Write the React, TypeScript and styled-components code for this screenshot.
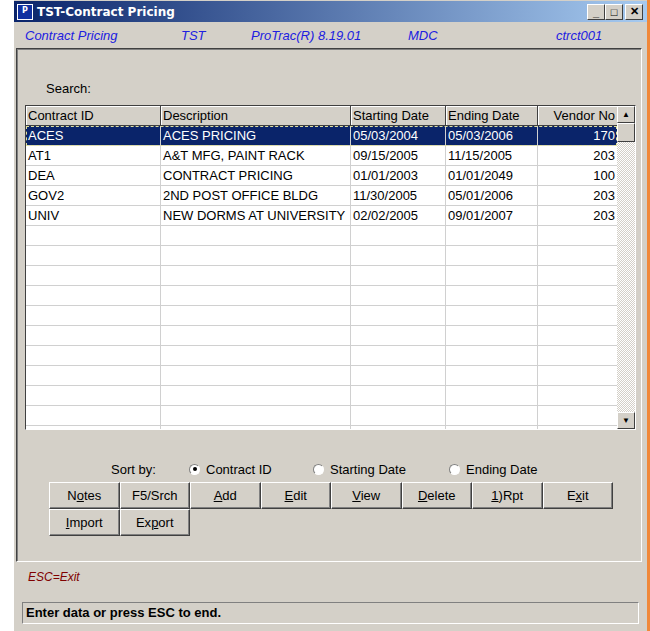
import styled, { createGlobalStyle } from 'styled-components';

const Global = createGlobalStyle`
  body { margin: 0; background: #fff; font-family: Arial, "Liberation Sans", sans-serif; }
`;

const Page = styled.div`
  width: 650px;
  height: 631px;
  display: flex;
  background: #fff;
`;

const Win = styled.div`
  margin-left: 13px;
  width: 633px;
  height: 631px;
  background: #d4d0c8;
  border-left: 1px solid #fff;
  display: flex;
  flex-direction: column;
`;

const Edge = styled.div`
  width: 4px;
  background: #f0883a;
`;

const TitleBar = styled.div`
  height: 21px;
  margin-top: 1px;
  background: linear-gradient(to right, #0a246a, #a6caf0);
  display: flex;
  align-items: center;
  padding: 0 4px 0 3px;
  color: #fff;
  font: bold 12px Tahoma, "DejaVu Sans", sans-serif;
  gap: 4px;
`;

const AppIcon = styled.div`
  width: 14px;
  height: 14px;
  background: #1030a0;
  border: 1px solid #fff;
  color: #fff;
  font-size: 8px;
  line-height: 12px;
  text-align: center;
`;

const Controls = styled.div`
  margin-left: auto;
  display: flex;
`;

const CtlBtn = styled.div<{ $gap?: boolean }>`
  width: 18px;
  height: 16px;
  margin-left: ${p => (p.$gap ? '2px' : '0')};
  background: #d4d0c8;
  border: 1px solid;
  border-color: #fff #404040 #404040 #fff;
  color: #000;
  font: bold 11px Arial, sans-serif;
  display: flex;
  align-items: center;
  justify-content: center;
  box-sizing: border-box;
`;

const InfoBar = styled.div`
  display: flex;
  height: 26px;
  align-items: center;
  font: italic 13px Arial, "Liberation Sans", sans-serif;
  color: #2020e0;
  padding-left: 11px;
`;

const Info = styled.span<{ $w: number }>`
  width: ${p => p.$w}px;
`;

const Panel = styled.div`
  margin: 0 5px 0 2px;
  height: 514px;
  border: 1px solid;
  border-color: #404040 #fff #fff #404040;
  box-shadow: inset 1px 1px 0 #808080;
  box-sizing: border-box;
  padding: 32px 8px 0 8px;
  display: flex;
  flex-direction: column;
`;

const Label = styled.div`
  font-size: 13px;
  color: #000;
  padding-left: 21px;
  height: 24px;
`;

const Grid = styled.div`
  width: 611px;
  height: 325px;
  border: 1px solid;
  border-color: #404040 #fff #fff #404040;
  box-shadow: inset 0 -1px 0 #404040;
  box-sizing: border-box;
  background: #fff;
  display: flex;
  overflow: hidden;
`;

const Table = styled.div`
  flex: 1;
  display: flex;
  flex-direction: column;
  overflow: hidden;
`;

const Row = styled.div<{ $sel?: boolean; $head?: boolean }>`
  display: grid;
  grid-template-columns: 135px 190px 95px 92px 80px;
  height: 20px;
  flex-shrink: 0;
  font-size: 13px;
  background: ${p => (p.$sel ? '#0a246a' : p.$head ? '#d4d0c8' : '#fff')};
  color: ${p => (p.$sel ? '#fff' : '#000')};
  outline: ${p => (p.$sel ? '1px dashed #e0e0a0' : 'none')};
  outline-offset: -1px;
`;

const Cell = styled.div<{ $right?: boolean; $head?: boolean }>`
  padding: 0 2px;
  line-height: 19px;
  white-space: nowrap;
  overflow: hidden;
  text-align: ${p => (p.$right ? 'right' : 'left')};
  border-right: 1px solid ${p => (p.$head ? '#404040' : '#d0d0d0')};
  border-bottom: 1px solid ${p => (p.$head ? '#404040' : '#d0d0d0')};
  ${p => p.$head && 'box-shadow: inset 1px 1px 0 #fff;'}
`;

const Scroll = styled.div`
  width: 18px;
  display: flex;
  flex-direction: column;
  background: repeating-conic-gradient(#fff 0 25%, #d4d0c8 0 50%) 0 0 / 2px 2px;
`;

const ScrollBtn = styled.div<{ $thumb?: boolean }>`
  height: ${p => (p.$thumb ? '19px' : '17px')};
  flex-shrink: 0;
  background: #d4d0c8;
  border: 1px solid;
  border-color: #fff #404040 #404040 #fff;
  box-sizing: border-box;
  font-size: 8px;
  display: flex;
  align-items: center;
  justify-content: center;
`;

const Spacer = styled.div`
  flex: 1;
`;

const SortRow = styled.div`
  margin-top: 30px;
  display: flex;
  align-items: center;
  font-size: 13px;
  height: 18px;
  padding-left: 86px;
`;

const SortLabel = styled.span`
  width: 78px;
`;

const Radio = styled.label<{ $w: number }>`
  display: flex;
  align-items: center;
  gap: 6px;
  width: ${p => p.$w}px;
`;

const Dot = styled.span<{ $on?: boolean }>`
  width: 11px;
  height: 11px;
  border-radius: 50%;
  background: #fff;
  border: 1px solid;
  border-color: #808080 #fff #fff #808080;
  box-sizing: border-box;
  display: flex;
  align-items: center;
  justify-content: center;
  &::after {
    content: '';
    width: 4px;
    height: 4px;
    border-radius: 50%;
    background: ${p => (p.$on ? '#000' : 'transparent')};
  }
`;

const Buttons = styled.div`
  margin: 4px 0 0 24px;
  display: grid;
  grid-template-columns: repeat(8, 70.5px);
  grid-auto-rows: 27px;
`;

const Btn = styled.div`
  background: #d4d0c8;
  border: 1px solid;
  border-color: #fff #404040 #404040 #fff;
  box-shadow: inset -1px -1px 0 #808080;
  font-size: 13px;
  display: flex;
  align-items: center;
  justify-content: center;
`;

const Esc = styled.div`
  font: italic 12px Arial, "Liberation Sans", sans-serif;
  color: #800000;
  padding: 8px 0 0 14px;
  height: 32px;
  box-sizing: border-box;
`;

const Status = styled.div`
  margin: 8px 8px 0 8px;
  height: 22px;
  border: 1px solid;
  border-color: #808080 #fff #fff #808080;
  box-sizing: border-box;
  font: bold 13px Arial, "Liberation Sans", sans-serif;
  padding-left: 3px;
  line-height: 20px;
`;

const rows = [
  ['ACES', 'ACES PRICING', '05/03/2004', '05/03/2006', '170'],
  ['AT1', 'A&T MFG, PAINT RACK', '09/15/2005', '11/15/2005', '203'],
  ['DEA', 'CONTRACT PRICING', '01/01/2003', '01/01/2049', '100'],
  ['GOV2', '2ND POST OFFICE BLDG', '11/30/2005', '05/01/2006', '203'],
  ['UNIV', 'NEW DORMS AT UNIVERSITY', '02/02/2005', '09/01/2007', '203'],
];

const heads = ['Contract ID', 'Description', 'Starting Date', 'Ending Date', 'Vendor No'];

const u = (pre: string, k: string, post: string) => (
  <span>{pre}<u>{k}</u>{post}</span>
);

const buttons = [
  u('N', 'o', 'tes'), <span>F5/Srch</span>, u('', 'A', 'dd'), u('', 'E', 'dit'),
  u('', 'V', 'iew'), u('', 'D', 'elete'), u('', '1', ')Rpt'), u('E', 'x', 'it'),
  u('', 'I', 'mport'), u('Ex', 'p', 'ort'),
];

export default function App() {
  const blank = Array.from({ length: 11 }, () => ['', '', '', '', '']);
  return (
    <Page>
      <Global />
      <Win>
        <TitleBar>
          <AppIcon>P</AppIcon>
          TST-Contract Pricing
          <Controls>
            <CtlBtn>_</CtlBtn>
            <CtlBtn>□</CtlBtn>
            <CtlBtn $gap>✕</CtlBtn>
          </Controls>
        </TitleBar>
        <InfoBar>
          <Info $w={156}>Contract Pricing</Info>
          <Info $w={70}>TST</Info>
          <Info $w={157}>ProTrac(R) 8.19.01</Info>
          <Info $w={148}>MDC</Info>
          <Info $w={60}>ctrct001</Info>
        </InfoBar>
        <Panel>
          <Label>Search:</Label>
          <Grid>
            <Table>
              <Row $head>
                {heads.map((h, i) => (
                  <Cell key={h} $head $right={i === 4}>{h}</Cell>
                ))}
              </Row>
              {[...rows, ...blank].map((r, i) => (
                <Row key={i} $sel={i === 0}>
                  {r.map((c, j) => (
                    <Cell key={j} $right={j === 4}>{c}</Cell>
                  ))}
                </Row>
              ))}
            </Table>
            <Scroll>
              <ScrollBtn>▲</ScrollBtn>
              <ScrollBtn $thumb />
              <Spacer />
              <ScrollBtn>▼</ScrollBtn>
            </Scroll>
          </Grid>
          <SortRow>
            <SortLabel>Sort by:</SortLabel>
            <Radio $w={124}><Dot $on />Contract ID</Radio>
            <Radio $w={136}><Dot />Starting Date</Radio>
            <Radio $w={110}><Dot />Ending Date</Radio>
          </SortRow>
          <Buttons>
            {buttons.map((b, i) => <Btn key={i}>{b}</Btn>)}
          </Buttons>
        </Panel>
        <Esc>ESC=Exit</Esc>
        <Status>Enter data or press ESC to end.</Status>
      </Win>
      <Edge />
    </Page>
  );
}
